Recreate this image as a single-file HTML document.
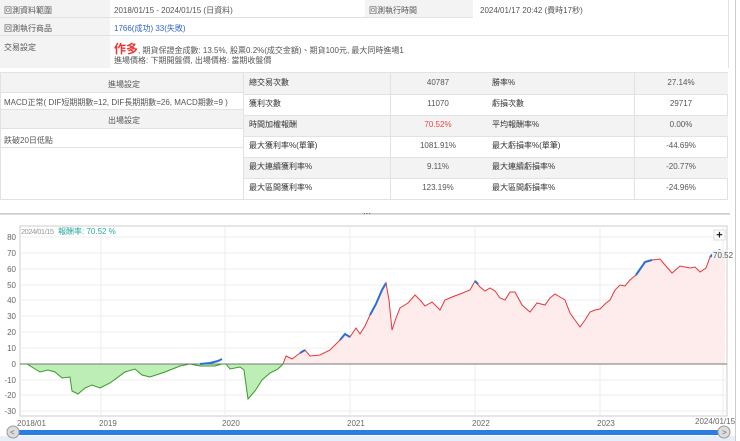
<!DOCTYPE html>
<html><head><meta charset="utf-8"><style>
*{margin:0;padding:0;box-sizing:border-box}
body{width:740px;height:441px;overflow:hidden;background:#fff;font-family:"Liberation Sans","Noto Sans CJK TC",sans-serif;font-size:8px;color:#555;position:relative}
.a{position:absolute}
.lab{background:#f3f3f3}
.bd{border-bottom:1px solid #e2e2e2}
.t{position:absolute;white-space:nowrap}
</style></head><body>
<div class="a lab bd" style="left:0;top:0;width:110px;height:18px"></div>
<div class="a lab bd" style="left:0;top:18px;width:110px;height:18px"></div>
<div class="a lab" style="left:0;top:36px;width:110px;height:32px"></div>
<div class="a lab bd" style="left:365px;top:0;width:108px;height:18px"></div>
<div class="a bd" style="left:110px;top:0;width:255px;height:18px"></div>
<div class="a bd" style="left:110px;top:18px;width:618px;height:18px"></div>
<div class="a" style="left:728px;top:0;width:1px;height:68px;background:#e2e2e2"></div>
<div class="t" style="left:4px;top:5px">回測資料範圍</div>
<div class="t" style="left:114px;top:5px">2018/01/15 - 2024/01/15 (日資料)</div>
<div class="t" style="left:369px;top:5px">回測執行時間</div>
<div class="t" style="left:480px;top:5px">2024/01/17 20:42 (費時17秒)</div>
<div class="t" style="left:4px;top:23px">回測執行商品</div>
<div class="t" style="left:114px;top:23px;color:#3366cc">1766(成功) 33(失敗)</div>
<div class="t" style="left:4px;top:42px">交易設定</div>
<div class="t" style="left:114px;top:40px"><b style="color:#e33;font-size:12px">作多</b>, 期貨保證金成數: 13.5%, 股票0.2%(成交金額)、期貨100元, 最大同時進場1</div>
<div class="t" style="left:114px;top:55px">進場價格: 下期開盤價, 出場價格: 當期收盤價</div>
<div class="a" style="left:0;top:72px;width:728px;height:128px;border:1px solid #e2e2e2"></div>
<div class="a lab bd" style="left:1px;top:73px;width:242px;height:20px"></div>
<div class="a bd" style="left:1px;top:93px;width:242px;height:17px"></div>
<div class="a lab bd" style="left:1px;top:110px;width:242px;height:19px"></div>
<div class="a bd" style="left:1px;top:129px;width:242px;height:19px"></div>
<div class="t" style="left:108px;top:79px">進場設定</div>
<div class="t" style="left:4px;top:97px">MACD正常( DIF短期期數=12, DIF長期期數=26, MACD期數=9 )</div>
<div class="t" style="left:108px;top:115px">出場設定</div>
<div class="t" style="left:4px;top:135px">跌破20日低點</div>
<div class="a lab" style="left:243px;top:73px;width:485px;height:21px"></div>
<div class="a lab" style="left:243px;top:115px;width:485px;height:21px"></div>
<div class="a lab" style="left:243px;top:157px;width:485px;height:21px"></div>
<div class="a" style="left:243px;top:73px;width:1px;height:127px;background:#e2e2e2"></div>
<div class="a" style="left:390px;top:73px;width:1px;height:127px;background:#e2e2e2"></div>
<div class="a" style="left:634px;top:73px;width:1px;height:127px;background:#e2e2e2"></div>
<div class="a" style="left:243px;top:94px;width:485px;height:1px;background:#e2e2e2"></div>
<div class="a" style="left:243px;top:115px;width:485px;height:1px;background:#e2e2e2"></div>
<div class="a" style="left:243px;top:136px;width:485px;height:1px;background:#e2e2e2"></div>
<div class="a" style="left:243px;top:157px;width:485px;height:1px;background:#e2e2e2"></div>
<div class="a" style="left:243px;top:178px;width:485px;height:1px;background:#e2e2e2"></div>
<div style="color:#333">
<div class="t" style="left:249px;top:77px">總交易次數</div>
<div class="t" style="left:249px;top:98px">獲利次數</div>
<div class="t" style="left:249px;top:119px">時間加權報酬</div>
<div class="t" style="left:249px;top:140px">最大獲利率%(單筆)</div>
<div class="t" style="left:249px;top:161px">最大連續獲利率%</div>
<div class="t" style="left:249px;top:182px">最大區間獲利率%</div>
<div class="t" style="left:492px;top:77px">勝率%</div>
<div class="t" style="left:492px;top:98px">虧損次數</div>
<div class="t" style="left:492px;top:119px">平均報酬率%</div>
<div class="t" style="left:492px;top:140px">最大虧損率%(單筆)</div>
<div class="t" style="left:492px;top:161px">最大連續虧損率%</div>
<div class="t" style="left:492px;top:182px">最大區間虧損率%</div>
</div>
<div class="t" style="left:390px;width:96px;text-align:center;top:78px">40787</div>
<div class="t" style="left:390px;width:96px;text-align:center;top:99px">11070</div>
<div class="t" style="left:390px;width:96px;text-align:center;top:120px;color:#e44">70.52%</div>
<div class="t" style="left:390px;width:96px;text-align:center;top:141px">1081.91%</div>
<div class="t" style="left:390px;width:96px;text-align:center;top:162px">9.11%</div>
<div class="t" style="left:390px;width:96px;text-align:center;top:183px">123.19%</div>
<div class="t" style="left:634px;width:94px;text-align:center;top:78px">27.14%</div>
<div class="t" style="left:634px;width:94px;text-align:center;top:99px">29717</div>
<div class="t" style="left:634px;width:94px;text-align:center;top:120px">0.00%</div>
<div class="t" style="left:634px;width:94px;text-align:center;top:141px">-44.69%</div>
<div class="t" style="left:634px;width:94px;text-align:center;top:162px">-20.77%</div>
<div class="t" style="left:634px;width:94px;text-align:center;top:183px">-24.96%</div>
<div class="a" style="left:0;top:213px;width:730px;height:2px;border-top:1px solid #ccc;border-bottom:1px solid #ddd"></div>
<div class="t" style="left:363px;top:209px;font-size:8px;color:#333">···</div>
<div class="a" style="left:735px;top:0;width:1px;height:441px;background:#ccc"></div>
<svg class="a" style="left:0;top:220px" width="740" height="221" viewBox="0 220 740 221">
<rect x="20" y="226" width="707" height="190" fill="#fff" stroke="#ccc"/>
<g stroke="#ececec" stroke-width="1">
<line x1="20" y1="237" x2="727" y2="237"/><line x1="20" y1="253" x2="727" y2="253"/><line x1="20" y1="269" x2="727" y2="269"/><line x1="20" y1="285" x2="727" y2="285"/><line x1="20" y1="300" x2="727" y2="300"/><line x1="20" y1="316" x2="727" y2="316"/><line x1="20" y1="332" x2="727" y2="332"/><line x1="20" y1="348" x2="727" y2="348"/><line x1="20" y1="380" x2="727" y2="380"/><line x1="20" y1="395" x2="727" y2="395"/><line x1="20" y1="411" x2="727" y2="411"/>
<line x1="101" y1="226" x2="101" y2="416"/><line x1="225" y1="226" x2="225" y2="416"/><line x1="350" y1="226" x2="350" y2="416"/><line x1="475" y1="226" x2="475" y2="416"/><line x1="600" y1="226" x2="600" y2="416"/><line x1="723" y1="226" x2="723" y2="416"/>
</g>
<path d="M283,364 L286,356 L292,359 L300,353 L305,350 L310,356 L320,355 L330,350 L340,340 L345,334 L350,337 L356,328 L360,334 L365,326 L370,315 L376,304 L382,290 L386,283 L389,300 L392,330 L396,318 L400,308 L408,303 L415,295 L420,300 L425,306 L432,302 L440,310 L445,300 L452,297 L460,294 L470,290 L475,281 L480,287 L485,291 L490,288 L495,291 L500,298 L505,300 L510,292 L515,292 L522,305 L530,312 L537,303 L545,305 L550,298 L555,294 L560,297 L565,300 L570,313 L575,320 L580,327 L585,320 L590,312 L595,310 L600,309 L606,303 L610,300 L615,290 L620,285 L625,286 L630,280 L636,275 L645,262 L652,260 L660,259 L665,265 L672,273 L680,266 L690,268 L695,267 L700,272 L706,268 L710,257 L715,252 L720,250 L725,252 L725,364 Z" fill="#fdeceb"/>
<path d="M20,364 L27,364 L35,369 L40,372 L48,370 L55,372 L62,378 L70,377 L72,391 L78,394 L85,388 L92,385 L100,388 L110,383 L125,372 L135,369 L142,375 L150,377 L165,372 L180,366 L190,364 L200,366 L215,366 L222,364 L226,364 L230,369 L240,367 L244,370 L248,399 L255,391 L262,380 L270,373 L278,369 L283,364 Z" fill="#bdeeb5"/>
<line x1="20" y1="364" x2="727" y2="364" stroke="#777"/>
<path d="M20,364 L27,364 L35,369 L40,372 L48,370 L55,372 L62,378 L70,377 L72,391 L78,394 L85,388 L92,385 L100,388 L110,383 L125,372 L135,369 L142,375 L150,377 L165,372 L180,366 L190,364 L200,366 L215,366 L222,364 L226,364 L230,369 L240,367 L244,370 L248,399 L255,391 L262,380 L270,373 L278,369 L283,364" fill="none" stroke="#3a9a2a" stroke-width="1"/>
<path d="M283,364 L286,356 L292,359 L300,353 L305,350 L310,356 L320,355 L330,350 L340,340 L345,334 L350,337 L356,328 L360,334 L365,326 L370,315 L376,304 L382,290 L386,283 L389,300 L392,330 L396,318 L400,308 L408,303 L415,295 L420,300 L425,306 L432,302 L440,310 L445,300 L452,297 L460,294 L470,290 L475,281 L480,287 L485,291 L490,288 L495,291 L500,298 L505,300 L510,292 L515,292 L522,305 L530,312 L537,303 L545,305 L550,298 L555,294 L560,297 L565,300 L570,313 L575,320 L580,327 L585,320 L590,312 L595,310 L600,309 L606,303 L610,300 L615,290 L620,285 L625,286 L630,280 L636,275 L645,262 L652,260 L660,259 L665,265 L672,273 L680,266 L690,268 L695,267 L700,272 L706,268 L710,257 L715,252 L720,250 L725,252" fill="none" stroke="#e8363a" stroke-width="1"/>
<g stroke="#2a6fd6" stroke-width="2" fill="none">
<path d="M200,364 L210,363 L218,361 L222,359"/><path d="M300,353 L305,350"/><path d="M340,340 L345,334 L350,337"/><path d="M370,315 L376,304 L382,290 L386,283"/><path d="M475,281 L478,284"/><path d="M636,275 L645,262 L652,260"/><path d="M710,257 L715,252 L720,250"/>
</g>
<rect x="714" y="230" width="11" height="10" fill="#fff" stroke="#ddd"/>
<text x="719.5" y="238.5" font-size="11" font-weight="bold" text-anchor="middle" fill="#222" font-family="Liberation Sans">+</text>
<rect x="712" y="250" width="16" height="9" fill="#f2f2f2"/>
<text x="713" y="258" font-size="8" fill="#555" font-family="Liberation Sans">70.52</text>
<g font-size="8" fill="#666" font-family="Liberation Sans" text-anchor="end">
<text x="16" y="240">80</text><text x="16" y="256">70</text><text x="16" y="272">60</text><text x="16" y="288">50</text><text x="16" y="303">40</text><text x="16" y="319">30</text><text x="16" y="335">20</text><text x="16" y="351">10</text><text x="16" y="367">0</text><text x="16" y="383">-10</text><text x="16" y="398">-20</text><text x="16" y="414">-30</text>
</g>
<g font-size="8" fill="#666" font-family="Liberation Sans">
<text x="17" y="426">2018/01</text><text x="99" y="426">2019</text><text x="222" y="426">2020</text><text x="347" y="426">2021</text><text x="472" y="426">2022</text><text x="597" y="426">2023</text><text x="695" y="424">2024/01/15</text>
</g>
<text x="21" y="234" font-size="7.5" fill="#999" font-family="Liberation Sans" textLength="33">2024/01/15</text>
<text x="58" y="234" font-size="8" fill="#2aa9a0" font-family="Liberation Sans,Noto Sans CJK TC">報酬率: 70.52 %</text>
<rect x="17" y="430" width="710" height="5" fill="#2a7de1"/>
<rect x="0" y="436" width="735" height="5" fill="#e6eef8"/>
<circle cx="13" cy="432" r="6" fill="#ddd" stroke="#999"/>
<text x="10" y="435" font-size="8" fill="#666">&lt;</text>
<circle cx="724" cy="432" r="6" fill="#ddd" stroke="#999"/>
<text x="722" y="435" font-size="8" fill="#666">&gt;</text>
</svg>
</body></html>
